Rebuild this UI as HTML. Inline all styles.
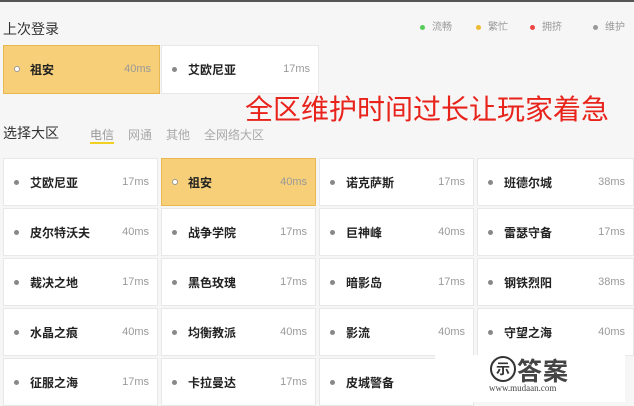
<!DOCTYPE html><html><head><meta charset="utf-8"><style>
body{margin:0;width:634px;height:402px;overflow:hidden;background:#f6f6f6;font-family:"Liberation Sans","Noto Sans CJK SC",sans-serif;position:relative}
.a{position:absolute}
.c{position:absolute;background:#fff;height:48px;width:155px;border:1px solid #e8e8e8;box-sizing:border-box}
.c.y{background:#f6cf78;border-color:#eab850}
.c i{position:absolute;left:10px;top:21px;width:5px;height:5px;border-radius:50%;background:#888}
.c.y i{background:#fff;border:1px solid #999;width:4px;height:4px;top:20px}
.c b{position:absolute;left:26px;top:15px;font-size:12px;color:#222;font-weight:bold}
.c s{text-decoration:none;position:absolute;right:8px;top:17px;font-size:11px;color:#999}
.lg{font-size:10px;color:#999;top:18px}
.lg:before{content:"";display:inline-block;width:5px;height:5px;border-radius:50%;background:var(--c);margin-right:7px;vertical-align:middle}
</style></head><body>
<div class="a" style="left:0;top:0;width:634px;height:2px;background:#555"></div>
<div class="a" style="left:3px;top:19px;font-size:14px;color:#333">上次登录</div>
<div class="a lg" style="left:420px;--c:#5c5">流畅</div>
<div class="a lg" style="left:476px;--c:#eb3">繁忙</div>
<div class="a lg" style="left:530px;--c:#e44">拥挤</div>
<div class="a lg" style="left:593px;--c:#999">维护</div>
<div class="c y" style="left:3px;top:45px;height:49px;width:157px"><i></i><b>祖安</b><s>40ms</s></div>
<div class="c" style="left:161px;top:45px;height:49px;width:158px"><i></i><b>艾欧尼亚</b><s>17ms</s></div>
<div class="a" style="left:245px;top:88px;font-size:28px;color:#e8231b;white-space:nowrap;letter-spacing:0">全区维护时间过长让玩家着急</div>
<div class="a" style="left:3px;top:123px;font-size:14px;color:#333">选择大区</div>
<div class="a" style="left:90px;top:126px;font-size:12px;color:#aaa;word-spacing:0"><span style="color:#999;border-bottom:2px solid #f0d020">电信</span><span style="margin-left:14px">网通</span><span style="margin-left:14px">其他</span><span style="margin-left:14px">全网络大区</span></div>
<div class="c" style="left:3px;top:158px"><i></i><b>艾欧尼亚</b><s>17ms</s></div>
<div class="c y" style="left:161px;top:158px"><i></i><b>祖安</b><s>40ms</s></div>
<div class="c" style="left:319px;top:158px"><i></i><b>诺克萨斯</b><s>17ms</s></div>
<div class="c" style="left:477px;top:158px;width:157px"><i></i><b>班德尔城</b><s>38ms</s></div>
<div class="c" style="left:3px;top:208px"><i></i><b>皮尔特沃夫</b><s>40ms</s></div>
<div class="c" style="left:161px;top:208px"><i></i><b>战争学院</b><s>17ms</s></div>
<div class="c" style="left:319px;top:208px"><i></i><b>巨神峰</b><s>40ms</s></div>
<div class="c" style="left:477px;top:208px;width:157px"><i></i><b>雷瑟守备</b><s>17ms</s></div>
<div class="c" style="left:3px;top:258px"><i></i><b>裁决之地</b><s>17ms</s></div>
<div class="c" style="left:161px;top:258px"><i></i><b>黑色玫瑰</b><s>17ms</s></div>
<div class="c" style="left:319px;top:258px"><i></i><b>暗影岛</b><s>17ms</s></div>
<div class="c" style="left:477px;top:258px;width:157px"><i></i><b>钢铁烈阳</b><s>38ms</s></div>
<div class="c" style="left:3px;top:308px"><i></i><b>水晶之痕</b><s>40ms</s></div>
<div class="c" style="left:161px;top:308px"><i></i><b>均衡教派</b><s>40ms</s></div>
<div class="c" style="left:319px;top:308px"><i></i><b>影流</b><s>40ms</s></div>
<div class="c" style="left:477px;top:308px;width:157px"><i></i><b>守望之海</b><s>40ms</s></div>
<div class="c" style="left:3px;top:358px"><i></i><b>征服之海</b><s>17ms</s></div>
<div class="c" style="left:161px;top:358px"><i></i><b>卡拉曼达</b><s>17ms</s></div>
<div class="c" style="left:319px;top:358px"><i></i><b>皮城警备</b><s>17ms</s></div>
<div class="a" style="left:435px;top:355px;width:190px;height:47px;background:#fff"></div>
<div class="a" style="left:490px;top:356px;width:22px;height:22px;border:2px solid #333;border-radius:50%;font-size:14px;line-height:22px;text-align:center;color:#333;font-weight:bold">示</div>
<div class="a" style="left:517px;top:352px;font-size:25px;color:#444;font-weight:bold;letter-spacing:1px">答案</div>
<div class="a" style="left:489px;top:383px;font-size:9px;color:#444;font-family:'Liberation Serif',serif">www.mudaan.com</div>
</body></html>
